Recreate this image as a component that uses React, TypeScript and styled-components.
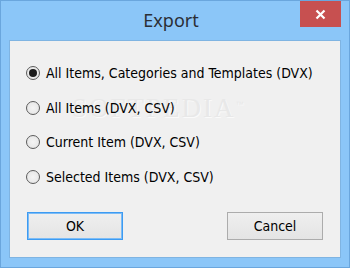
import styled, { createGlobalStyle } from 'styled-components';

const options = [
  'All Items, Categories and Templates (DVX)',
  'All Items (DVX, CSV)',
  'Current Item (DVX, CSV)',
  'Selected Items (DVX, CSV)',
];

const App = () => (
  <>
    <GlobalStyle />
    <Window>
      <TitleBar>
        <span />
        <Title>Export</Title>
        <CloseButton>
          <svg width="11" height="11" viewBox="0 0 11 11">
            <path d="M1.5 1.5 L9.5 9.5 M9.5 1.5 L1.5 9.5" stroke="#fff" strokeWidth="2.2" />
          </svg>
        </CloseButton>
      </TitleBar>
      <Client>
        <Watermark>SOFTPEDIA<sup>™</sup></Watermark>
        <OptionList>
          {options.map((label, i) => (
            <Option key={label}>
              <Radio $checked={i === 0} />
              <span>{label}</span>
            </Option>
          ))}
        </OptionList>
        <ButtonRow>
          <Button $default>OK</Button>
          <Button>Cancel</Button>
        </ButtonRow>
      </Client>
    </Window>
  </>
);

export default App;

const GlobalStyle = createGlobalStyle`
  body {
    margin: 0;
    background: #8ac5f7;
  }
`;

const Window = styled.div`
  box-sizing: border-box;
  width: 350px;
  height: 268px;
  display: flex;
  flex-direction: column;
  background: #8bc6f8;
  border: 1px solid #6aa6dd;
`;

const TitleBar = styled.div`
  display: grid;
  grid-template-columns: 1fr auto 1fr;
  height: 39px;
  padding-right: 8px;
`;

const Title = styled.div`
  padding-top: 7px;
  font-family: 'Segoe UI', 'Noto Sans', sans-serif;
  font-size: 18px;
  color: #2b2f36;
`;

const CloseButton = styled.div`
  justify-self: end;
  width: 41px;
  height: 26px;
  display: flex;
  align-items: center;
  justify-content: center;
  background: #c75050;
`;

const Client = styled.div`
  position: relative;
  flex: 1;
  display: flex;
  flex-direction: column;
  margin: 0 8px 9px;
  background: #f0f0f0;
  border: 1px solid #7fb4e2;
`;

const Watermark = styled.div`
  position: absolute;
  left: 62px;
  top: 52px;
  font-family: 'Liberation Serif', serif;
  font-size: 27px;
  letter-spacing: 2px;
  color: #e8e8e8;
  text-shadow: 1px 1px 0 #fafafa;
  pointer-events: none;

  sup {
    font-family: 'Liberation Sans', sans-serif;
    font-size: 8px;
  }
`;

const OptionList = styled.div`
  position: relative;
  display: flex;
  flex-direction: column;
  gap: 14.5px;
  padding: 22px 0 0 16px;
`;

const Option = styled.label`
  display: flex;
  align-items: center;
  gap: 6px;
  height: 20px;
  font-family: 'DejaVu Sans', sans-serif;
  font-stretch: condensed;
  font-size: 14px;
  color: #000;
`;

const Radio = styled.span<{ $checked?: boolean }>`
  box-sizing: border-box;
  flex: none;
  width: 14px;
  height: 14px;
  border-radius: 50%;
  border: 1px solid #5c5c5c;
  background: radial-gradient(circle, #f4f4f4 0%, #e2e2e2 100%);
  display: flex;
  align-items: center;
  justify-content: center;

  &::after {
    content: '';
    display: ${({ $checked }) => ($checked ? 'block' : 'none')};
    width: 8px;
    height: 8px;
    border-radius: 50%;
    background: #1c1c1c;
  }
`;

const ButtonRow = styled.div`
  margin-top: auto;
  display: flex;
  justify-content: space-between;
  padding: 0 17px 17px;
`;

const Button = styled.div<{ $default?: boolean }>`
  box-sizing: border-box;
  width: 96px;
  height: 28px;
  display: flex;
  align-items: center;
  justify-content: center;
  font-family: 'DejaVu Sans', sans-serif;
  font-stretch: condensed;
  font-size: 14px;
  color: #000;
  background: linear-gradient(#efefef, #e4e4e4);
  border: 1px solid ${({ $default }) => ($default ? '#3d9bf2' : '#acacac')};
  box-shadow: ${({ $default }) => ($default ? 'inset 0 0 0 1px #7cbcf6' : 'none')};
`;
